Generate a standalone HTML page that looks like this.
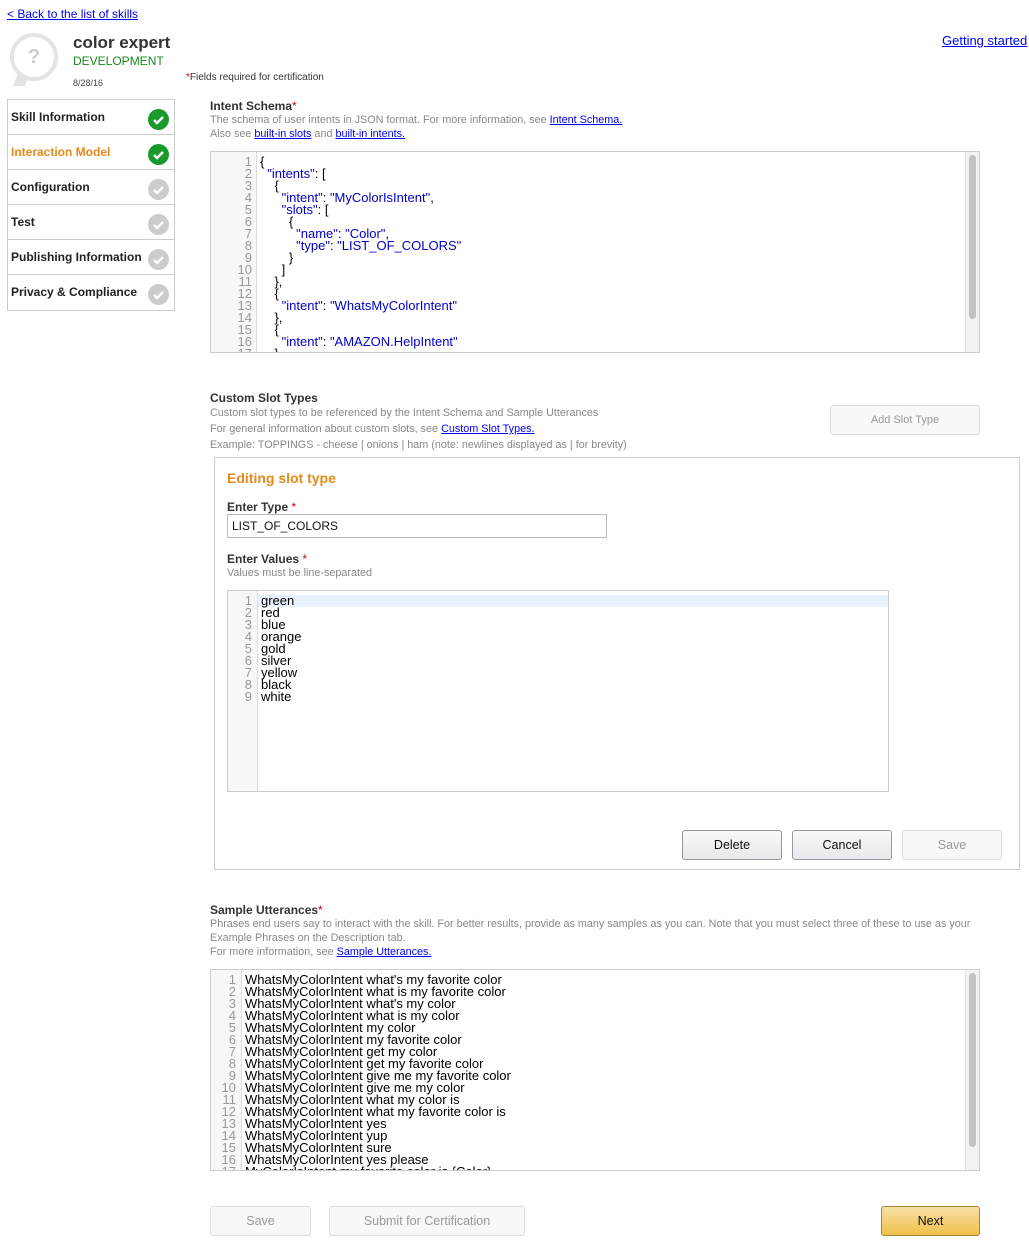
<!DOCTYPE html>
<html><head><meta charset="utf-8"><style>
*{box-sizing:border-box;margin:0;padding:0}
body{width:1029px;height:1244px;background:#fff;font-family:"Liberation Sans",Arial,sans-serif;color:#333;position:relative;overflow:hidden}
.a{position:absolute}
a{color:#0000ee;text-decoration:underline}
.side{left:7px;top:99px;width:168px;border:1px solid #ccc}
.side div{height:35px;border-bottom:1px solid #ccc;font-size:12px;font-weight:bold;padding:10px 0 0 3px;position:relative;color:#222}
.side div:last-child{border-bottom:none}
.chk{position:absolute;right:5px;top:9px;width:21px;height:21px;border-radius:50%;background:#ccc}
.chk.g{background:#1a9a2a}
.chk svg{position:absolute;left:0;top:0}
.h{font-size:12px;font-weight:bold;color:#333}
.h i{color:#c00;font-style:normal;font-weight:normal}
.d{font-size:10.8px;color:#888}
.ed{border:1px solid #ccc;background:#fff;overflow:hidden;font-size:13px;line-height:12px;font-family:"Liberation Sans",sans-serif}
.gut{position:absolute;left:0;top:0;bottom:0;background:#f7f7f7;border-right:1px solid #ddd;color:#999;text-align:right;padding-top:4px}
.code{position:absolute;top:4px;white-space:pre;color:#000}
.blue{color:#00c}
.btn{position:absolute;height:30px;border:1px solid #999;border-radius:3px;background:linear-gradient(#f7f8fa,#e7e9ec);font-size:12.5px;text-align:center;line-height:28px;color:#111}
.btn.dis{border-color:#ddd;background:#f7f8fa;color:#999}
.sb{position:absolute;background:#f2f2f2;border-left:1px solid #e4e4e4}
.sb div{position:absolute;left:3px;width:7px;border-radius:4px;background:#c1c1c1}
</style></head><body>
<a class="a" href="#" style="left:7px;top:7px;font-size:12px">&lt; Back to the list of skills</a>
<div class="a" style="left:10px;top:33px;width:48px;height:48px;border-radius:50%;border:4px solid #e4e4e4;background:#fff"></div>
<div class="a" style="left:16px;top:70px;width:12px;height:16px;background:#e4e4e4;transform:skewX(-20deg)"></div>
<div class="a" style="left:14px;top:37px;width:40px;height:40px;border-radius:50%;background:#fff;text-align:center;line-height:40px;font-size:20px;font-weight:bold;color:#ccc">?</div>
<div class="a" style="left:73px;top:33px;font-size:17px;font-weight:bold;color:#333">color expert</div>
<div class="a" style="left:73px;top:54px;font-size:12px;color:#1a8a1a">DEVELOPMENT</div>
<div class="a" style="left:73px;top:78px;font-size:9px;color:#444">8/28/16</div>
<a class="a" href="#" style="left:942px;top:33px;font-size:13px">Getting started</a>
<div class="a" style="left:186px;top:72px;font-size:10px;color:#333"><span style="color:#c00">*</span>Fields required for certification</div>

<div class="a side">
<div>Skill Information<span class="chk g"><svg width="21" height="21"><path d="M6 11l3 3 6-6" stroke="#fff" stroke-width="2.5" fill="none"/></svg></span></div>
<div style="color:#e68a1a">Interaction Model<span class="chk g"><svg width="21" height="21"><path d="M6 11l3 3 6-6" stroke="#fff" stroke-width="2.5" fill="none"/></svg></span></div>
<div>Configuration<span class="chk"><svg width="21" height="21"><path d="M6 11l3 3 6-6" stroke="#fff" stroke-width="2.5" fill="none"/></svg></span></div>
<div>Test<span class="chk"><svg width="21" height="21"><path d="M6 11l3 3 6-6" stroke="#fff" stroke-width="2.5" fill="none"/></svg></span></div>
<div>Publishing Information<span class="chk"><svg width="21" height="21"><path d="M6 11l3 3 6-6" stroke="#fff" stroke-width="2.5" fill="none"/></svg></span></div>
<div>Privacy &amp; Compliance<span class="chk"><svg width="21" height="21"><path d="M6 11l3 3 6-6" stroke="#fff" stroke-width="2.5" fill="none"/></svg></span></div>
</div>

<div class="a h" style="left:210px;top:99px">Intent Schema<i>*</i></div>
<div class="a d" style="left:210px;top:114px">The schema of user intents in JSON format. For more information, see <a href="#">Intent Schema.</a></div>
<div class="a d" style="left:210px;top:128px">Also see <a href="#">built-in slots</a> and <a href="#">built-in intents.</a></div>

<div class="a ed" style="left:210px;top:151px;width:770px;height:202px">
<div class="gut" style="width:46px;padding-right:4px">1<br>2<br>3<br>4<br>5<br>6<br>7<br>8<br>9<br>10<br>11<br>12<br>13<br>14<br>15<br>16<br>17</div>
<div class="code" style="left:49px">{
  <span class="blue">"intents"</span>: [
    {
      <span class="blue">"intent"</span>: <span class="blue">"MyColorIsIntent"</span>,
      <span class="blue">"slots"</span>: [
        {
          <span class="blue">"name"</span>: <span class="blue">"Color"</span>,
          <span class="blue">"type"</span>: <span class="blue">"LIST_OF_COLORS"</span>
        }
      ]
    },
    {
      <span class="blue">"intent"</span>: <span class="blue">"WhatsMyColorIntent"</span>
    },
    {
      <span class="blue">"intent"</span>: <span class="blue">"AMAZON.HelpIntent"</span>
    }</div>
<div class="sb" style="left:754px;top:0;width:15px;height:200px"><div style="top:3px;height:164px"></div></div>
</div>

<div class="a h" style="left:210px;top:391px">Custom Slot Types</div>
<div class="a d" style="left:210px;top:407px">Custom slot types to be referenced by the Intent Schema and Sample Utterances</div>
<div class="a d" style="left:210px;top:423px">For general information about custom slots, see <a href="#">Custom Slot Types.</a></div>
<div class="a d" style="left:210px;top:439px">Example: TOPPINGS - cheese | onions | ham (note: newlines displayed as | for brevity)</div>
<div class="btn dis" style="left:830px;top:405px;width:150px;font-size:11px">Add Slot Type</div>

<div class="a" style="left:214px;top:457px;width:806px;height:413px;border:1px solid #ccc"></div>
<div class="a" style="left:227px;top:470px;font-size:14px;font-weight:bold;color:#e68a1a">Editing slot type</div>
<div class="a h" style="left:227px;top:500px">Enter Type <i>*</i></div>
<div class="a" style="left:227px;top:514px;width:380px;height:24px;border:1px solid #bbb;font-size:12px;padding:4px 4px;color:#111">LIST_OF_COLORS</div>
<div class="a h" style="left:227px;top:552px">Enter Values <i>*</i></div>
<div class="a d" style="left:227px;top:567px">Values must be line-separated</div>
<div class="a ed" style="left:227px;top:590px;width:662px;height:202px">
<div class="a" style="left:30px;top:4px;right:0;height:12px;background:#e8f2fe"></div>
<div class="gut" style="width:30px;padding-right:5px">1<br>2<br>3<br>4<br>5<br>6<br>7<br>8<br>9</div>
<div class="code" style="left:33px">green
red
blue
orange
gold
silver
yellow
black
white</div>
</div>
<div class="btn" style="left:682px;top:830px;width:100px">Delete</div>
<div class="btn" style="left:792px;top:830px;width:100px">Cancel</div>
<div class="btn dis" style="left:902px;top:830px;width:100px">Save</div>

<div class="a h" style="left:210px;top:903px">Sample Utterances<i>*</i></div>
<div class="a d" style="left:210px;top:918px">Phrases end users say to interact with the skill. For better results, provide as many samples as you can. Note that you must select three of these to use as your</div>
<div class="a d" style="left:210px;top:932px">Example Phrases on the Description tab.</div>
<div class="a d" style="left:210px;top:946px">For more information, see <a href="#">Sample Utterances.</a></div>
<div class="a ed" style="left:210px;top:969px;width:770px;height:202px">
<div class="gut" style="width:31px;padding-right:5px">1<br>2<br>3<br>4<br>5<br>6<br>7<br>8<br>9<br>10<br>11<br>12<br>13<br>14<br>15<br>16<br>17</div>
<div class="code" style="left:34px">WhatsMyColorIntent what's my favorite color
WhatsMyColorIntent what is my favorite color
WhatsMyColorIntent what's my color
WhatsMyColorIntent what is my color
WhatsMyColorIntent my color
WhatsMyColorIntent my favorite color
WhatsMyColorIntent get my color
WhatsMyColorIntent get my favorite color
WhatsMyColorIntent give me my favorite color
WhatsMyColorIntent give me my color
WhatsMyColorIntent what my color is
WhatsMyColorIntent what my favorite color is
WhatsMyColorIntent yes
WhatsMyColorIntent yup
WhatsMyColorIntent sure
WhatsMyColorIntent yes please
MyColorIsIntent my favorite color is {Color}</div>
<div class="sb" style="left:754px;top:0;width:15px;height:200px"><div style="top:3px;height:174px"></div></div>
</div>

<div class="btn dis" style="left:210px;top:1206px;width:101px">Save</div>
<div class="btn dis" style="left:329px;top:1206px;width:196px">Submit for Certification</div>
<div class="btn" style="left:881px;top:1206px;width:99px;border-color:#a88734;background:linear-gradient(#f7dfa5,#f0c14b)">Next</div>
</body></html>
